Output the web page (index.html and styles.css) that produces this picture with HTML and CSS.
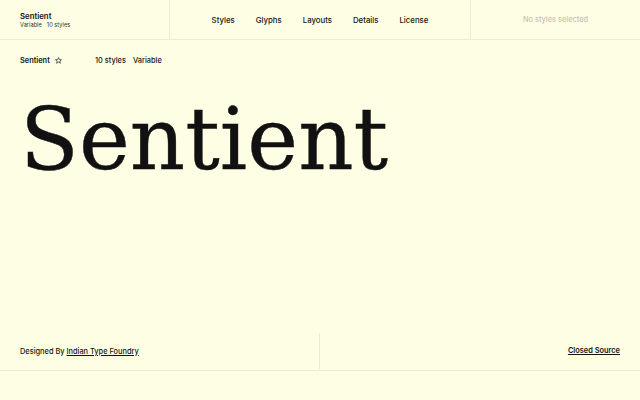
FILE: index.html
```html
<html>

<head>
    <title>Sentient</title>
    <link rel="stylesheet" href="styles.css">
</head>

<body>
    <div class="page">
        <header class="top-bar">
            <div class="brand">
                <div class="brand-name">Sentient</div>
                <div class="brand-meta"><span>Variable</span><span>10 styles</span></div>
            </div>
            <nav class="nav">
                <a href="#">Styles</a>
                <a href="#">Glyphs</a>
                <a href="#">Layouts</a>
                <a href="#">Details</a>
                <a href="#">License</a>
            </nav>
            <div class="selection">No styles selected</div>
        </header>

        <main class="hero">
            <div class="info-row">
                <div class="info-name">
                    <span>Sentient</span>
                    <!-- favourite star -->
                    <svg class="star" viewBox="0 0 10 10" width="7" height="7">
                        <path d="M5 0.8 L6.2 3.7 L9.3 3.9 L6.9 5.9 L7.7 8.9 L5 7.2 L2.3 8.9 L3.1 5.9 L0.7 3.9 L3.8 3.7 Z"
                            fill="none" stroke="#222" stroke-width="1" stroke-linejoin="round" />
                    </svg>
                </div>
                <div class="info-meta"><span>10 styles</span><span>Variable</span></div>
            </div>
            <h1 class="specimen">Sentient</h1>
        </main>

        <footer class="bottom-bar">
            <div class="credit">Designed By&nbsp;<a href="#">Indian Type Foundry</a></div>
            <div class="license"><a href="#">Closed Source</a></div>
        </footer>
    </div>
</body>

</html>
```

FILE: styles.css
```css
body {
    margin: 0;
    background: #fefee5;
    color: #141414;
    font-family: Inter, "Liberation Sans", sans-serif;
}

.page {
    display: flex;
    flex-direction: column;
    height: 400px;
}

a {
    color: inherit;
    text-decoration: none;
}

.top-bar {
    display: grid;
    grid-template-columns: 170px 1fr 170px;
    height: 39px;
    border-bottom: 1px solid #ecebd4;
}

.brand {
    display: flex;
    flex-direction: column;
    justify-content: center;
    padding-left: 20px;
    border-right: 1px solid #ecebd4;
}

.brand-name {
    font-size: 7.8px;
    font-weight: 600;
    line-height: 10px;
}

.brand-meta {
    display: flex;
    gap: 5px;
    font-size: 5.7px;
    line-height: 8px;
    color: #333;
}

.nav {
    display: flex;
    justify-content: center;
    align-items: center;
    gap: 21px;
    font-size: 7.8px;
    font-weight: 500;
}

.selection {
    display: flex;
    justify-content: center;
    align-items: center;
    border-left: 1px solid #ecebd4;
    font-size: 7.4px;
    font-weight: 500;
    color: #c6c5ad;
}

.hero {
    flex: 1;
    padding: 0 20px;
}

.info-row {
    display: flex;
    align-items: center;
    height: 40px;
    font-size: 7.4px;
    font-weight: 500;
}

.info-name {
    display: flex;
    align-items: center;
    gap: 5px;
    width: 75px;
    font-weight: 600;
}

.info-meta {
    display: flex;
    gap: 7px;
}

.specimen {
    margin: 16px 0 0 0;
    font-family: "DejaVu Serif", serif;
    font-weight: 400;
    font-size: 86px;
    line-height: 86px;
    color: #111;
    -webkit-text-stroke: 0.4px #111;
}

.bottom-bar {
    display: grid;
    grid-template-columns: 1fr 1fr;
    height: 40px;
    margin-bottom: 29px;
    border-bottom: 1px solid #ecebd4;
    font-size: 7.4px;
    font-weight: 500;
}

.credit {
    display: flex;
    align-items: center;
    padding-left: 20px;
    margin: 3px 0 1px;
    border-right: 1px solid #ecebd4;
}

.credit a {
    text-decoration: underline;
}

.license {
    display: flex;
    align-items: center;
    justify-content: flex-end;
    padding-right: 20px;
    font-weight: 600;
}

.license a {
    text-decoration: underline;
}
```
